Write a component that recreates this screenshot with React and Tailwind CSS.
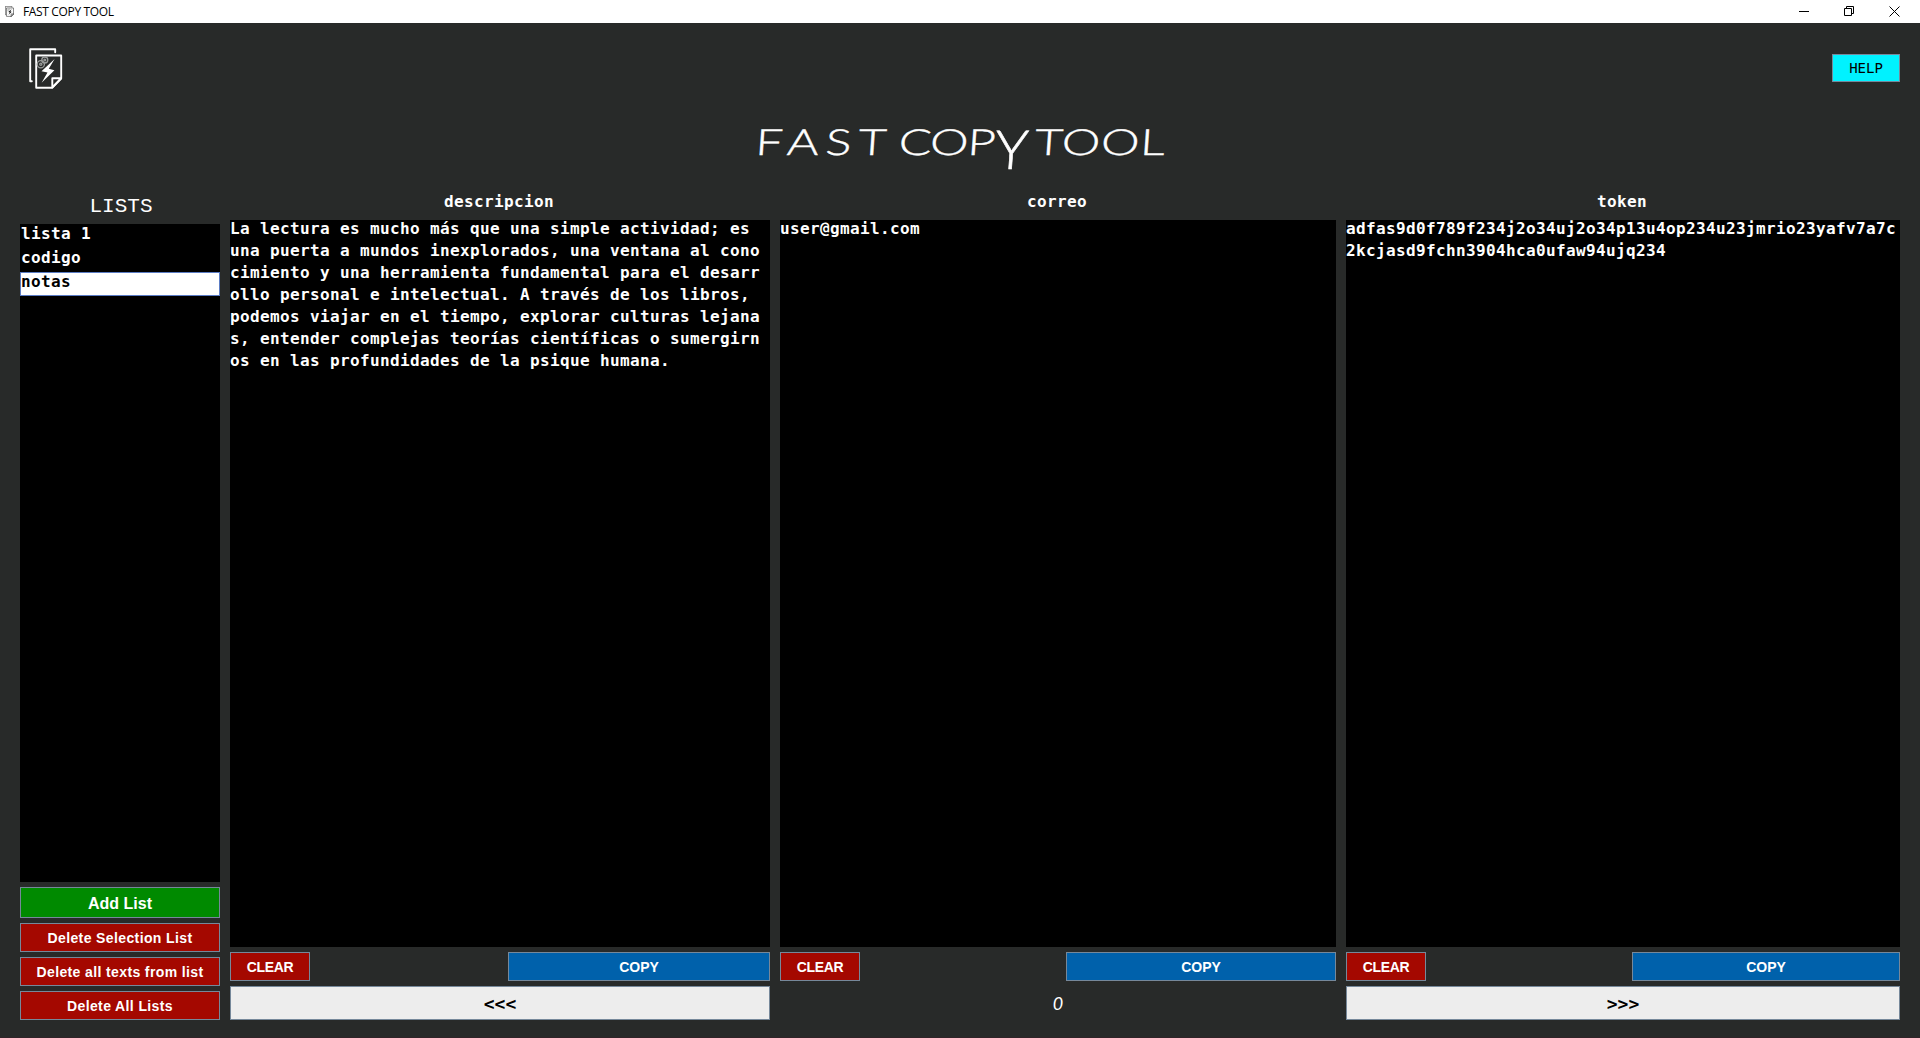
const LISTS = [
  { name: 'lista 1' },
  { name: 'codigo' },
  { name: 'notas', selected: true },
];

const DESCRIPTION = [
  'La lectura es mucho más que una simple actividad; es',
  'una puerta a mundos inexplorados, una ventana al cono',
  'cimiento y una herramienta fundamental para el desarr',
  'ollo personal e intelectual. A través de los libros,',
  'podemos viajar en el tiempo, explorar culturas lejana',
  's, entender complejas teorías científicas o sumergirn',
  'os en las profundidades de la psique humana.',
];

const TOKEN = [
  'adfas9d0f789f234j2o34uj2o34p13u4op234u23jmrio23yafv7a7c',
  '2kcjasd9fchn3904hca0ufaw94ujq234',
];

const MONO = "font-['DejaVu_Sans_Mono',monospace] font-bold text-[16px] tracking-[0.368px]";
const ARROWS = "font-['DejaVu_Sans_Mono',monospace] font-bold text-[18px]";
const SANS = "font-['Liberation_Sans',sans-serif] font-bold";
const BTN = 'flex items-center justify-center border border-[#76889a] whitespace-nowrap';

function AppLogo({ className, stroke }) {
  return (
    <svg className={className} viewBox="0 0 34 42" fill="none" stroke={stroke} strokeWidth="1.9" strokeLinecap="round" strokeLinejoin="round">
      <path d="M2.8 33.2H1.200V1.300h25v3" />
      <path d="M7.200 7.500h25v23l-8.900 9.200H7.200z" />
      <path d="M23.300 39.500v-9.200H32z" />
      <path d="M25.600 11L12.500 23.300l6 1.200-5.900 10.200 12.800-12.500-5.600-1.500z" fill={stroke} stroke="none" />
      <g stroke="#9a9c9b" strokeWidth="1.3" strokeLinecap="butt">
        <circle cx="11.800" cy="16.200" r="3.600" />
        <circle cx="11.800" cy="16.200" r="1.100" />
        <circle cx="15.800" cy="12" r="3" />
        <circle cx="15.800" cy="12" r=".9" />
      </g>
    </svg>
  );
}

function TitleBar() {
  return (
    <header className="flex h-[23px] items-center bg-white text-black">
      <AppLogo className="ml-[5px] h-[11px] w-[9px]" stroke="#111111" />
      <span className="ml-[9px] font-['Open_Sans',sans-serif] text-[12px] leading-[22px] tracking-[-0.35px]">
        FAST COPY TOOL
      </span>
      <svg className="ml-auto mr-[19px] h-[11px] w-[102px]" viewBox="0 0 102 11" fill="none" stroke="#000">
        <path d="M0 5.5h10" />
        <path d="M45.500 2.500h7v7h-7zM47.500 2.500v-2h7v7h-2" />
        <path d="M90.500 .5l10 10M100.500 .5l-10 10" />
      </svg>
    </header>
  );
}

function Column({ title, lines, width, copyWidth, children }) {
  return (
    <section className={`flex flex-col ${width}`}>
      <h2 className={`${MONO} h-[30px] pr-[2px] pt-[2px] text-center leading-[20px] text-white`}>{title}</h2>
      <div className={`${MONO} h-[727px] overflow-hidden bg-black leading-[22px] text-white`}>
        <div className="-mt-[2px] whitespace-pre">
          {lines.map((line) => (
            <div key={line}>{line}</div>
          ))}
        </div>
      </div>
      <div className="mt-[5px] flex justify-between">
        <button className={`${BTN} ${SANS} h-[29px] w-20 bg-[#a40800] pt-[2px] text-[14px] tracking-[-0.3px] text-white`}>
          CLEAR
        </button>
        <button className={`${BTN} ${SANS} h-[29px] bg-[#0061ab] pt-[2px] text-[14px] tracking-[-0.1px] text-white ${copyWidth}`}>
          COPY
        </button>
      </div>
      <div className="mt-[5px] h-[34px]">{children}</div>
    </section>
  );
}

export default function App() {
  return (
    <div className="flex h-[1038px] w-[1920px] flex-col overflow-hidden border-b border-[#302428] bg-[#282a29]">
      <TitleBar />
      <div className="flex h-[91px] items-start justify-between pl-[29px] pr-5">
        <AppLogo className="mt-[25px] h-[42px] w-[34px]" stroke="#ffffff" />
        <button className="mt-[31px] flex h-7 w-[68px] items-center justify-center border border-[#76889a] bg-[#00f2ff] font-['DejaVu_Sans_Mono',monospace] text-[14px] text-black">
          HELP
        </button>
      </div>
      <h1 className="flex h-[76px] justify-center pt-[5px] font-['Lato',sans-serif] text-[36px] leading-[44px] text-white">
        <span className="flex origin-center -skew-x-3 scale-x-[1.35] gap-[4px] font-light [-webkit-text-stroke:0.4px_white]">
          <span className="tracking-[5px]">FAST</span>
          <span className="tracking-[-0.7px]">
            COP<span className="ml-[2px] inline-block origin-[50%_20%] scale-x-[1.15] scale-y-[1.500]">Y</span>
          </span>
          <span className="pl-[3px] tracking-[0.6px]">TOOL</span>
        </span>
      </h1>
      <main className="flex gap-[10px] px-5">
        <aside className="flex w-[200px] flex-col">
          <h2 className="h-[34px] pl-[2px] pt-[6px] text-center font-['Liberation_Mono',monospace] text-[21px] leading-[22px] text-white">
            LISTS
          </h2>
          <ul className={`${MONO} h-[658px] bg-black text-white`}>
            {LISTS.map(({ name, selected }) => (
              <li
                key={name}
                className={
                  selected
                    ? 'h-6 border border-[#5b7cc4] bg-white leading-[17px] text-black'
                    : 'h-6 pl-px leading-[19px]'
                }
              >
                {name}
              </li>
            ))}
          </ul>
          <div className={`${SANS} mt-[5px] flex flex-col gap-[5px] text-[14px] tracking-[0.38px] text-white`}>
            <button className={`${BTN} h-[31px] bg-[#008a00] pt-[2px] text-[16px] tracking-[0px]`}>Add List</button>
            <button className={`${BTN} h-[29px] bg-[#a40800] pt-[2px]`}>Delete Selection List</button>
            <button className={`${BTN} h-[29px] bg-[#a40800] pt-[2px]`}>Delete all texts from list</button>
            <button className={`${BTN} h-[29px] bg-[#a40800] pt-[2px]`}>Delete All Lists</button>
          </div>
        </aside>
        <Column title="descripcion" lines={DESCRIPTION} width="w-[540px]" copyWidth="w-[262px]">
          <button className={`${BTN} ${ARROWS} h-full w-full bg-[#ededed] text-black`}>&lt;&lt;&lt;</button>
        </Column>
        <Column title="correo" lines={['user@gmail.com']} width="w-[556px]" copyWidth="w-[270px]">
          <div className="flex h-full items-center justify-center font-['Lato',sans-serif] text-[18px] italic text-white">
            0
          </div>
        </Column>
        <Column title="token" lines={TOKEN} width="w-[554px]" copyWidth="w-[268px]">
          <button className={`${BTN} ${ARROWS} h-full w-full bg-[#ededed] text-black`}>&gt;&gt;&gt;</button>
        </Column>
      </main>
    </div>
  );
}
